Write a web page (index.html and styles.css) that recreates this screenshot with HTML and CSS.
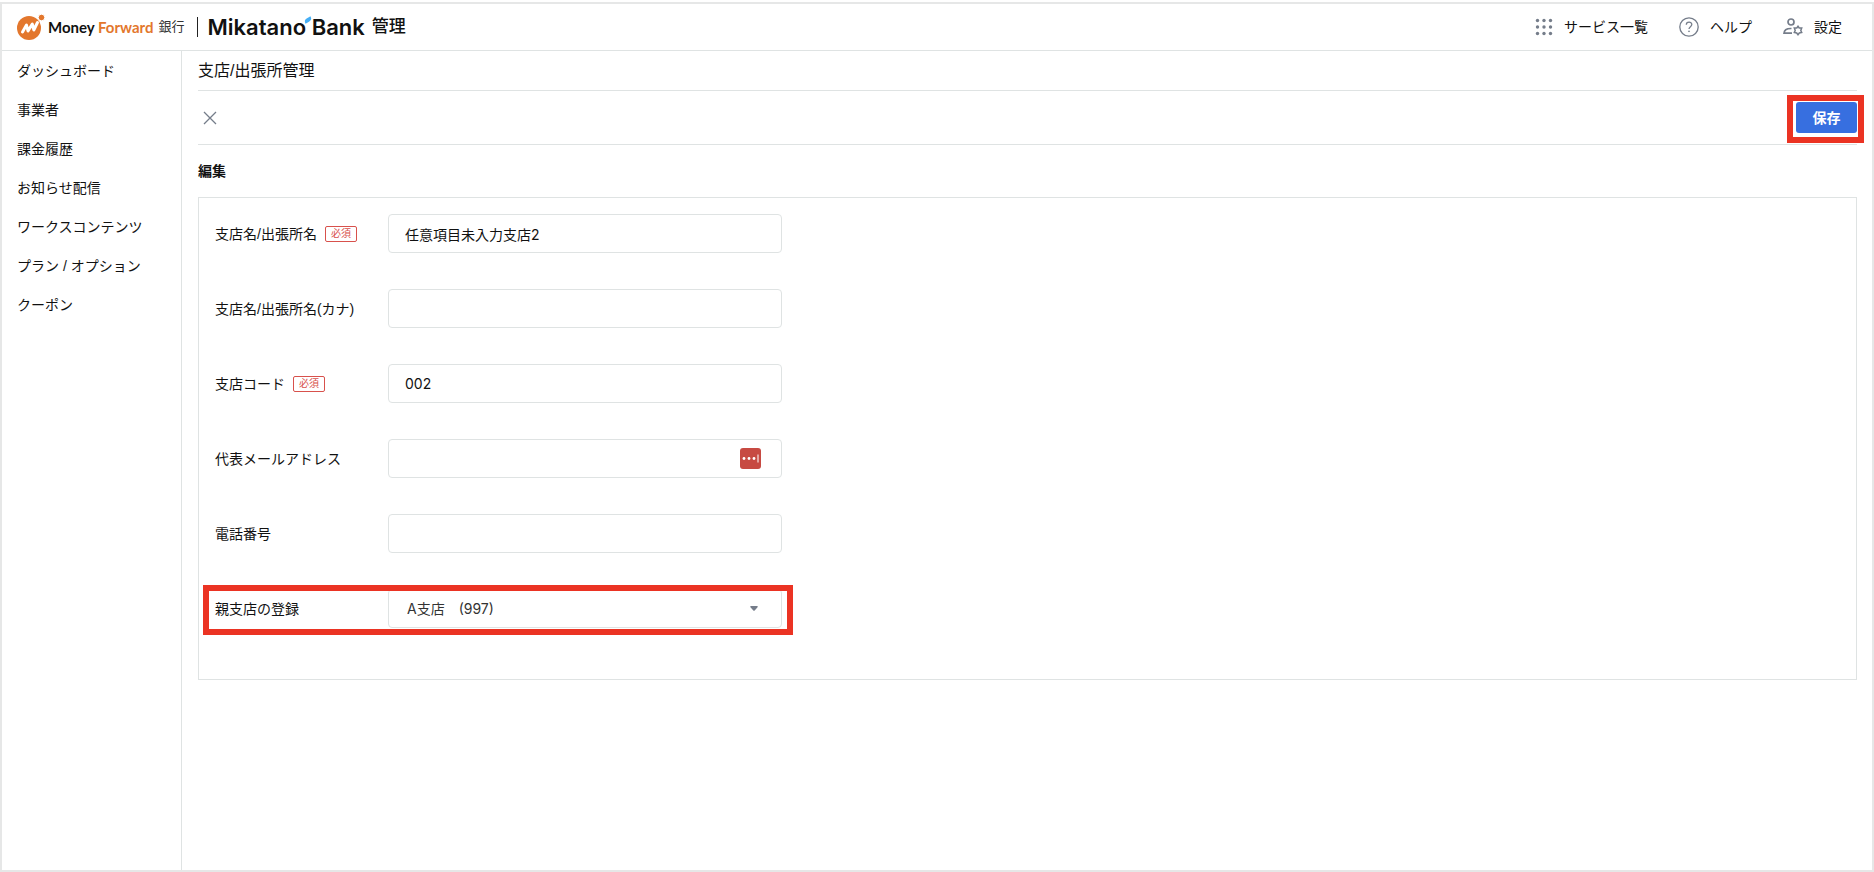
FILE: index.html
```html
<!DOCTYPE html>
<html lang="ja">

<head>
  <meta charset="UTF-8" />
  <meta name="viewport" content="width=device-width, initial-scale=1.0" />
  <title>支店/出張所管理</title>
  <link rel="stylesheet" href="styles.css">
</head>

<body>
  <div class="frame">
    <!-- top bar -->
    <header class="header">
      <a class="logo" href="#">
        <svg class="logo-mark" width="28" height="26" viewBox="0 0 28 26" aria-hidden="true">
          <circle cx="12" cy="14" r="12" fill="#e3772d" />
          <circle cx="24.500" cy="3.500" r="3.300" fill="#e3772d" stroke="#fff" stroke-width="1" />
          <path d="M5.500 18 L9.500 11 L11 17 L15.300 10 L16.800 16 L20.500 8.500" fill="none" stroke="#fff" stroke-width="3" stroke-linejoin="round" stroke-linecap="round" />
        </svg>
        <span class="logo-money">Money <span class="orange">Forward</span></span>
        <span class="logo-ginko">銀行</span>
        <span class="logo-line"></span>
        <span class="logo-product"><span class="accent">Mikatano</span> Bank</span>
        <span class="logo-kanri">管理</span>
      </a>
      <nav class="header-nav">
        <a href="#">
          <svg width="18" height="18" viewBox="0 0 18 18" fill="#757d8a" aria-hidden="true">
            <circle cx="2.500" cy="2.500" r="1.700" /><circle cx="9" cy="2.500" r="1.700" /><circle cx="15.500" cy="2.500" r="1.700" />
            <circle cx="2.500" cy="9" r="1.700" /><circle cx="9" cy="9" r="1.700" /><circle cx="15.500" cy="9" r="1.700" />
            <circle cx="2.500" cy="15.500" r="1.700" /><circle cx="9" cy="15.500" r="1.700" /><circle cx="15.500" cy="15.500" r="1.700" />
          </svg>
          サービス一覧
        </a>
        <a href="#">
          <svg width="20" height="20" viewBox="0 0 20 20" fill="none" stroke="#757d8a" stroke-width="1.300" aria-hidden="true">
            <circle cx="10" cy="10" r="9.200" />
            <path d="M7.300 7.800 C7.300 4.200 12.800 4.300 12.800 7.500 C12.800 9.700 10 9.600 10 12" />
            <circle cx="10" cy="14.300" r=".5" fill="#757d8a" stroke-width=".8" />
          </svg>
          ヘルプ
        </a>
        <a href="#">
          <svg width="20" height="20" viewBox="0 0 20 20" fill="none" stroke="#757d8a" stroke-width="1.700" aria-hidden="true">
            <circle cx="8" cy="5" r="3" />
            <path d="M8.500 11.500 C4 11.300 1.300 12.700 1 16.200 H9" />
            <path d="M15 9.300 L16.200 11 L18.700 11 L17.800 13.500 L18.700 15.500 L16.300 16 L15 17.800 L13.700 16 L11.300 15.500 L12.200 13.500 L11.300 11 L13.800 11 Z" stroke-width="1.500" />
            <circle cx="15" cy="13.500" r="1.500" fill="#fff" stroke="none" />
          </svg>
          設定
        </a>
      </nav>
    </header>

    <div class="body">
      <!-- side menu -->
      <nav class="sidebar">
        <ul>
          <li><a href="#">ダッシュボード</a></li>
          <li><a href="#">事業者</a></li>
          <li><a href="#">課金履歴</a></li>
          <li><a href="#">お知らせ配信</a></li>
          <li><a href="#">ワークスコンテンツ</a></li>
          <li><a href="#">プラン / オプション</a></li>
          <li><a href="#">クーポン</a></li>
        </ul>
      </nav>

      <main class="main">
        <h1 class="title">支店/出張所管理</h1>
        <div class="toolbar">
          <button class="close" type="button" aria-label="閉じる">
            <svg width="14" height="14" viewBox="0 0 14 14" stroke="#757d8a" stroke-width="1.300" aria-hidden="true">
              <path d="M1 1 L13 13 M13 1 L1 13" />
            </svg>
          </button>
          <div class="marked marked-save">
            <button class="save" type="submit" form="branch">保存</button>
          </div>
        </div>
        <h2 class="subtitle">編集</h2>

        <!-- branch form -->
        <form class="panel" id="branch">
          <div class="row">
            <label for="name">支店名/出張所名<span class="required">必須</span></label>
            <input type="text" id="name" value="任意項目未入力支店2" />
          </div>
          <div class="row">
            <label for="kana">支店名/出張所名(カナ)</label>
            <input type="text" id="kana" />
          </div>
          <div class="row">
            <label for="code">支店コード<span class="required">必須</span></label>
            <input type="text" id="code" value="002" />
          </div>
          <div class="row">
            <label for="mail">代表メールアドレス</label>
            <div class="field">
              <input type="email" id="mail" />
              <svg class="autofill" width="21" height="21" viewBox="0 0 21 21" aria-hidden="true">
                <rect width="21" height="21" rx="3" fill="#c74a42" />
                <g fill="#fff">
                  <circle cx="4" cy="10.500" r="1.400" /><circle cx="9" cy="10.500" r="1.400" /><circle cx="14" cy="10.500" r="1.400" />
                  <rect x="17.500" y="6.500" width="1" height="8" />
                </g>
              </svg>
            </div>
          </div>
          <div class="row">
            <label for="tel">電話番号</label>
            <input type="tel" id="tel" />
          </div>
          <div class="row marked marked-row">
            <label for="parent">親支店の登録</label>
            <div class="field">
              <select id="parent">
                <option>A支店　(997)</option>
              </select>
              <svg class="arrow" width="8" height="5" viewBox="0 0 8 5" fill="#757d8a" aria-hidden="true">
                <path d="M1 0 H7 Q8.500 0 7.500 1.300 L4.700 4.500 Q4 5 3.300 4.500 L.5 1.300 Q-.5 0 1 0 Z" />
              </svg>
            </div>
          </div>
        </form>
      </main>
    </div>
  </div>
</body>

</html>
```

FILE: styles.css
```css
* {
  box-sizing: border-box;
  margin: 0;
  padding: 0;
}

body {
  padding-top: 2px;
  background: #fff;
  color: #111;
  font: 14px/20px "Liberation Sans", "Noto Sans CJK JP", sans-serif;
}

ul {
  list-style: none;
}

a {
  color: inherit;
  text-decoration: none;
}

svg {
  display: block;
  flex: none;
}

button,
input,
select {
  font: inherit;
  color: inherit;
}

.frame {
  display: flex;
  flex-direction: column;
  min-height: calc(100vh - 2px);
  border: 2px solid #e6e7e7;
}

.header {
  display: flex;
  align-items: center;
  justify-content: space-between;
  height: 47px;
  padding: 0 30px 0 15px;
  border-bottom: 1px solid #dfe3e3;
}

.logo {
  display: flex;
  align-items: center;
  white-space: nowrap;
}

.logo-money {
  margin-left: 3px;
  font: bold 15px/20px Lato, sans-serif;
}

.orange {
  color: #e3772d;
}

.logo-ginko {
  margin-left: 5px;
  font-size: 13px;
  color: #333;
}

.logo-line {
  width: 1px;
  height: 20px;
  margin: 0 10px 0 12px;
  background: #222;
}

.logo-product {
  font: 600 22px/24px Inter, sans-serif;
}

/* blue tick above the last letter of the product name */
.accent {
  position: relative;
}

.accent::after {
  content: "";
  position: absolute;
  top: 4px;
  right: -6px;
  width: 8px;
  height: 4px;
  border-radius: 4px 0;
  background: #45aef5;
  transform: rotate(-30deg);
}

.logo-kanri {
  margin-left: 7px;
  font-size: 17px;
  font-weight: 500;
}

.header-nav {
  display: flex;
  gap: 31px;
}

.header-nav a {
  display: flex;
  align-items: center;
  gap: 11px;
}

.body {
  display: flex;
  flex: 1;
}

.sidebar {
  width: 180px;
  padding: 10px 15px;
  border-right: 1px solid #dfe3e3;
}

.sidebar li {
  margin-bottom: 19px;
}

.main {
  flex: 1;
  padding: 0 15px 0 16px;
}

.title {
  padding: 10px 0 9px;
  border-bottom: 1px solid #dfe3e3;
  font-size: 16px;
  font-weight: 400;
}

.toolbar {
  display: flex;
  align-items: center;
  justify-content: space-between;
  height: 54px;
  border-bottom: 1px solid #dfe3e3;
}

.close {
  padding: 5px;
  border: none;
  background: none;
  cursor: pointer;
}

.save {
  display: block;
  width: 61px;
  height: 31px;
  border: none;
  border-radius: 3px;
  background: #376fe0;
  color: #fff;
  font-weight: bold;
  cursor: pointer;
}

/* red frame round the parts to look at */
.marked {
  position: relative;
}

.marked::after {
  content: "";
  position: absolute;
  border: 6px solid #eb3323;
  pointer-events: none;
}

.marked-save::after {
  inset: -7px -7px -10px -9px;
}

.marked-row::after {
  inset: -4px -11px -7px -12px;
}

.subtitle {
  padding: 16px 0;
  font-size: 14px;
}

.panel {
  display: flex;
  flex-direction: column;
  align-items: flex-start;
  gap: 36px;
  padding: 16px 16px 51px;
  border: 1px solid #dfe3e3;
}

.row {
  display: grid;
  grid-template-columns: 173px 394px;
  align-items: center;
}

.row label {
  display: flex;
  align-items: center;
}

.required {
  margin-left: 8px;
  padding: 0 5px;
  border: 1px solid #d8514c;
  border-radius: 2px;
  color: #d8514c;
  font-size: 10px;
  line-height: 14px;
}

.row input,
.row select {
  width: 100%;
  height: 39px;
  padding: 0 16px;
  border: 1px solid #dfe3e3;
  border-radius: 4px;
  background: #fff;
  font-family: Inter, "Noto Sans CJK JP", sans-serif;
  outline: none;
}

.row select {
  appearance: none;
  padding: 0 18px;
  color: #333;
}

.field {
  position: relative;
}

.autofill {
  position: absolute;
  top: 9px;
  right: 21px;
}

.arrow {
  position: absolute;
  top: 17px;
  right: 24px;
}
```
